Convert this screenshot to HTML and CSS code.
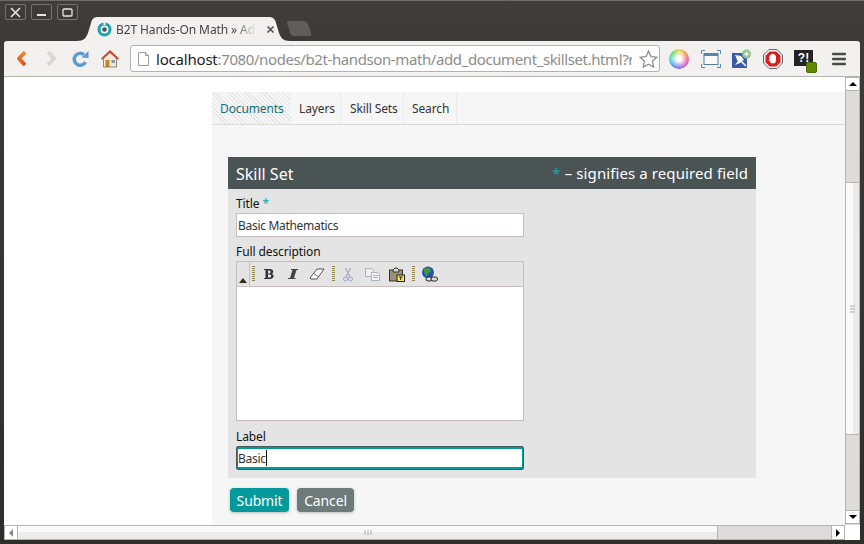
FILE: index.html
```html
<!DOCTYPE html>
<html lang="en">
<head>
    <meta charset="UTF-8">
    <title>B2T Hands-On Math</title>
    <link rel="stylesheet" href="styles.css">
</head>
<body>
    <div class="window">
        <div class="titlebar">
            <div class="win-buttons">
                <button class="win-btn"><svg width="11" height="11" viewBox="0 0 11 11"><path d="M1 1l9 9M10 1l-9 9" stroke="#e6e6e2" stroke-width="1.6" fill="none"/></svg></button>
                <button class="win-btn"><svg width="11" height="11" viewBox="0 0 11 11"><path d="M1 8h9" stroke="#e6e6e2" stroke-width="2" fill="none"/></svg></button>
                <button class="win-btn"><svg width="11" height="11" viewBox="0 0 11 11"><rect x="1" y="2" width="9" height="7" rx="1" stroke="#e6e6e2" stroke-width="1.3" fill="none"/></svg></button>
            </div>
            <div class="tab">
                <svg class="tab-shape" width="213" height="24" viewBox="0 0 213 24"><path d="M0 24c7 0 9-3 11-8l3-10c1-4 3-6 7-6h171c4 0 6 2 7 6l3 10c2 5 4 8 11 8z" fill="#f2f1f0"/></svg>
                <svg class="favicon" width="15" height="15" viewBox="0 0 15 15"><circle cx="7.5" cy="7.5" r="7" fill="#1fa3ad"/><circle cx="7.5" cy="7.5" r="4" fill="#e8f2f2"/><circle cx="7.5" cy="7.5" r="2.2" fill="#445a5e"/><rect x="6.5" y="0" width="2" height="3" fill="#e8f2f2"/></svg>
                <span class="tab-title">B2T Hands-On Math » Add D</span>
                <svg class="tab-close" width="9" height="9" viewBox="0 0 9 9"><path d="M1.5 1.500l6 6M7.500 1.500l-6 6" stroke="#555" stroke-width="1.7"/></svg>
            </div>
            <svg class="new-tab" width="25" height="16" viewBox="0 0 25 16"><path d="M1 0h16c2 0 3 1 4 3l3 9c.5 2 .5 3-1 3H7c-2 0-3-1-4-3L0 2c-.3-1 0-2 1-2z" fill="#5f5e5a"/></svg>
        </div>

        <div class="toolbar">
            <svg class="tool" width="16" height="19" viewBox="0 0 16 19"><defs><linearGradient id="back" x1="0" y1="0" x2="0" y2="1"><stop offset="0" stop-color="#ef8a3c"/><stop offset="1" stop-color="#d9531e"/></linearGradient></defs><path d="M11 3L5 9.500l6 6.500" stroke="url(#back)" stroke-width="4" stroke-linejoin="round" fill="none"/></svg>
            <svg class="tool" width="16" height="19" viewBox="0 0 16 19"><path d="M5 3l6 6.500L5 16" stroke="#d9d8d5" stroke-width="4" fill="none"/></svg>
            <svg class="tool" width="18" height="18" viewBox="0 0 18 18"><path d="M13.500 12.200A6 6 0 1 1 12 4.600" stroke="#5b9bd5" stroke-width="3.400" fill="none"/><path d="M9.500 7.500L16.500 8V1z" fill="#5b9bd5"/></svg>
            <svg class="tool" width="20" height="19" viewBox="0 0 20 19"><path d="M10 1L1 9.500h2.500V18h13V9.500H19z" fill="#f2ead6"/><path d="M10 1L1 9.500l1.500 1.200L10 4l7.500 6.700L19 9.500z" fill="#c2453a"/><rect x="5.500" y="11" width="4" height="7" fill="#c9861f"/><rect x="11.500" y="11" width="3.500" height="3" fill="#8a9aa8"/><path d="M3.500 10v8h13v-8" stroke="#8f8878" fill="none"/></svg>
            <div class="omnibox">
                <svg width="11" height="14" viewBox="0 0 11 14"><path d="M.5.500h7l3 3v10H.5z" fill="#fff" stroke="#9a9a9a"/><path d="M7.500.500v3h3" fill="none" stroke="#9a9a9a"/></svg>
                <span class="url"><b>localhost</b>:7080/nodes/b2t-handson-math/add_document_skillset.html?r</span>
                <svg width="19" height="18" viewBox="0 0 19 18"><path d="M9.500 1.200l2.500 5.400 5.800.7-4.300 4 1.200 5.800-5.200-2.900-5.200 2.900 1.200-5.800-4.300-4 5.800-.7z" fill="#fff" stroke="#8a8a8a" stroke-width="1.200"/></svg>
            </div>
            <div class="extensions">
                <span class="color-wheel"></span>
                <svg class="ext-window" width="20" height="18" viewBox="0 0 20 18"><path d="M.5 4V.5H4M16 .5h3.500V4M.5 14v3.500H4M16 17.500h3.500V14" fill="none" stroke="#4a86b8"/><rect x="3" y="3.500" width="14" height="11" fill="#fafafa" stroke="#5a7f9e"/><rect x="3" y="3.500" width="14" height="2.500" fill="#5a86aa"/></svg>
                <svg width="20" height="20" viewBox="0 0 20 20"><rect x="0" y="4" width="15" height="15" fill="#3b5ba8"/><path d="M3 6l6 1 3 4-2 1-2 2-3-3-1-3zM6 12l-3 4 5-2z" fill="#fff"/><path d="M9 12l5 5" stroke="#fff" stroke-width="1.500"/><circle cx="14.500" cy="5" r="4.500" fill="#8fc48c"/><path d="M14.500 2.800v4.400M12.300 5h4.400" stroke="#fff" stroke-width="1.300"/></svg>
                <svg width="20" height="20" viewBox="0 0 20 20"><path d="M6 .5h8L19.500 6v8L14 19.500H6L.5 14V6z" fill="#f4f4f4" stroke="#666"/><path d="M6.700 2.500h6.600L17.500 6.700v6.600l-4.200 4.200H6.700l-4.200-4.200V6.700z" fill="#d81f1f"/><path d="M6.500 9V6.500h1.300V5.200h1.300v-.5h1.300v.5h1.400v1.300h1.200v4.800l-1 3H8L6 11z" fill="#fff"/></svg>
                <div class="badge-icon"><span>?!</span><i class="badge-dot"></i></div>
                <svg class="ext-menu" width="14" height="14" viewBox="0 0 14 14"><path d="M1 2h12M1 7h12M1 12h12" stroke="#4a4a48" stroke-width="2.500" stroke-linecap="round"/></svg>
            </div>
        </div>

        <div class="viewport">
            <div class="page">
                <div class="panel">
                    <nav class="tabs">
                        <a class="nav-tab active">Documents</a>
                        <a class="nav-tab">Layers</a>
                        <a class="nav-tab">Skill Sets</a>
                        <a class="nav-tab">Search</a>
                    </nav>
                    <form class="form">
                        <div class="form-head">
                            <h2>Skill Set</h2>
                            <span class="required-note"><em>*</em> – signifies a required field</span>
                        </div>
                        <div class="form-body">
                            <label>Title <em>*</em></label>
                            <div class="input">Basic Mathematics</div>
                            <label class="gap">Full description</label>
                            <div class="editor">
                                <div class="editor-bar">
                                    <span class="collapse"><i></i></span>
                                    <span class="grip"></span>
                                    <svg class="ic-bold" width="12" height="12" viewBox="0 0 12 12"><path d="M1 1h6c4 0 4 4.500 1.500 5C12 6.500 11 11 7 11H1v-1h1.500V2H1zM5 2.500v3h1.500c1.500 0 1.500-3 0-3zM5 6.500v3h2c1.500 0 1.500-3 0-3z" fill="#333"/></svg>
                                    <svg class="ic-italic" width="12" height="12" viewBox="0 0 12 12"><path d="M4 1h7v1H9.500L7 10h1.500v1H1v-1h2L5.500 2H4z" fill="#444"/></svg>
                                    <svg class="ic-eraser" width="16" height="12" viewBox="0 0 16 12"><path d="M1 10l7-9h7l-7 10H2z" fill="#fbfbf6" stroke="#555"/><path d="M5 5.500l4 3" stroke="#777"/></svg>
                                    <span class="grip grip-b"></span>
                                    <svg class="ic-cut" width="10" height="15" viewBox="0 0 10 15"><path d="M2.500 1L7 10M7.500 1L3 10" stroke="#a9a9c2" stroke-width="1.200"/><circle cx="2.500" cy="12" r="2" fill="none" stroke="#a0a0d0"/><circle cx="7.500" cy="12" r="2" fill="none" stroke="#a0a0d0"/></svg>
                                    <svg class="ic-copy" width="15" height="13" viewBox="0 0 15 13"><path d="M.5.500h6l2 2v6h-8z" fill="#eee" stroke="#b0b0c0"/><path d="M6.500 4.500h6l2 2v6h-8z" fill="#f4f4f4" stroke="#b0b0c0"/><path d="M8 7.500h5M8 9.500h5" stroke="#b0b0c0"/></svg>
                                    <svg class="ic-paste" width="16" height="15" viewBox="0 0 16 15"><rect x=".5" y="3" width="13" height="11" fill="#98927a" stroke="#333"/><path d="M4 3l2-2h2l2 2v2H4z" fill="#d8d8d0" stroke="#333"/><rect x="8" y="8" width="7.500" height="6.500" fill="#f7e64a" stroke="#222"/><path d="M10 10h3.500M11.700 10v3" stroke="#222"/></svg>
                                    <span class="grip grip-b"></span>
                                    <svg class="ic-link" width="17" height="17" viewBox="0 0 17 17"><circle cx="7" cy="6.500" r="6" fill="#2a4fb0"/><path d="M3 3l3-1.500 3 1 1 3-3 2-1 3-2-2-1-3z" fill="#3f9a3a"/><rect x="5" y="11" width="6" height="4" rx="2" fill="#ddd" stroke="#222"/><rect x="10" y="11" width="6.500" height="4" rx="2" fill="#ddd" stroke="#222"/></svg>
                                </div>
                                <div class="editor-area"></div>
                            </div>
                            <label class="gap-sm">Label</label>
                            <div class="input focused">Basic<i class="caret"></i></div>
                        </div>
                        <div class="actions">
                            <button type="button" class="btn submit">Submit</button>
                            <button type="button" class="btn cancel">Cancel</button>
                        </div>
                    </form>
                </div>
            </div>
            <div class="vscroll">
                <span class="sb-btn up"><i></i></span>
                <span class="v-track"></span>
                <span class="v-thumb"><svg width="5" height="8" viewBox="0 0 5 8"><path d="M0 1h5M0 4h5M0 7h5" stroke="#aaa"/></svg></span>
                <span class="v-track fill"></span>
                <span class="sb-btn down"><i></i></span>
            </div>
        </div>

        <div class="hscroll">
            <span class="sb-btn left"><i></i></span>
            <span class="h-thumb"><svg width="8" height="5" viewBox="0 0 8 5"><path d="M1 0v5M4 0v5M7 0v5" stroke="#aaa"/></svg></span>
            <span class="h-track"></span>
            <span class="sb-btn right"><i></i></span>
            <span class="corner"></span>
        </div>
    </div>
</body>
</html>
```

FILE: styles.css
```css
* {
    box-sizing: border-box;
}
body {
    margin: 0;
    font-family: "Noto Sans", sans-serif;
    font-size: 12px;
    color: #222;
}
em {
    font-style: normal;
    color: #19a6a8;
}

.window {
    width: 864px;
    height: 544px;
    overflow: hidden;
    display: flex;
    flex-direction: column;
    padding: 0 4px 4px;
    border-top: 1px solid #6d6c68;
    background: linear-gradient(#3f3e3a 0, #3b3a36 41px, #2f2e2b 100%);
}

/* title bar */
.titlebar {
    height: 40px;
    display: flex;
    align-items: flex-start;
    flex: none;
}
.win-buttons {
    display: flex;
    gap: 5px;
    margin: 3px 0 0 1px;
}
.win-btn {
    width: 21px;
    height: 16px;
    padding: 0;
    display: flex;
    align-items: center;
    justify-content: center;
    border: 1px solid #75746f;
    border-radius: 2px;
    background: #3c3b37;
}
.tab {
    width: 213px;
    height: 24px;
    margin: 16px 0 0 -1px;
    padding: 0 0 0 20px;
    display: flex;
    align-items: center;
    flex: none;
    position: relative;
}
.tab-shape {
    position: absolute;
    left: 0;
    top: 0;
}
.favicon, .tab-title, .tab-close {
    position: relative;
}
.tab-title {
    width: 140px;
    margin-left: 4px;
    overflow: hidden;
    white-space: nowrap;
    color: #444;
    letter-spacing: -0.1px;
    -webkit-mask-image: linear-gradient(90deg, #000 85%, transparent);
    mask-image: linear-gradient(90deg, #000 85%, transparent);
}
.tab-close {
    margin-left: 10px;
}
.new-tab {
    margin: 20px 0 0 -3px;
}

/* toolbar */
.toolbar {
    height: 36px;
    flex: none;
    display: flex;
    align-items: center;
    padding-left: 10px;
    background: #f2f1f0;
    border-bottom: 1px solid #b5b4b1;
    border-radius: 3px 3px 0 0;
}
.tool {
    margin-right: 13px;
}
.toolbar .tool:nth-child(3) {
    margin-right: 10px;
}
.toolbar .tool:nth-child(4) {
    margin-right: 10px;
}
.omnibox {
    width: 530px;
    height: 27px;
    display: flex;
    align-items: center;
    gap: 7px;
    padding: 0 1px 0 7px;
    background: #fff;
    border: 1px solid #b3b2ae;
    border-radius: 3px;
    flex: none;
}
.url {
    flex: 1;
    overflow: hidden;
    white-space: nowrap;
    font-size: 15px;
    letter-spacing: -0.4px;
    color: #8c8c8c;
}
.url b {
    font-weight: 400;
    letter-spacing: -0.2px;
    color: #222;
}
.extensions {
    display: flex;
    align-items: center;
    gap: 11px;
    margin-left: 9px;
}
.color-wheel {
    width: 20px;
    height: 20px;
    border-radius: 50%;
    background:
        radial-gradient(#fff 15%, rgba(255, 255, 255, 0) 75%),
        conic-gradient(#f0d030, #f09030, #f04070, #d040c0, #7050e0, #3090f0, #30d0d0, #50d050, #f0d030);
}
.ext-window {
    margin-left: 1px;
}
.ext-menu {
    margin-left: 8px;
}
.badge-icon {
    width: 19px;
    height: 16px;
    background: #222;
    position: relative;
    color: #fff;
    font: bold 12px/16px "Liberation Sans", sans-serif;
    text-align: center;
    margin-top: -2px;
}
.badge-dot {
    position: absolute;
    right: -4px;
    bottom: -7px;
    width: 11px;
    height: 11px;
    border-radius: 2px;
    background: #5f8a00;
    border: 1px solid #4a6c00;
}

/* page */
.viewport {
    height: 448px;
    flex: none;
    display: flex;
    background: #fff;
}
.page {
    width: 841px;
    padding: 15px 0 0 208px;
}
.panel {
    width: 633px;
    height: 433px;
    background: #f6f6f6;
}
.tabs {
    height: 33px;
    display: flex;
    border-bottom: 1px solid #dcdcdc;
}
.nav-tab {
    line-height: 34px;
    padding-left: 8px;
    border-right: 1px solid #ececec;
    letter-spacing: -0.12px;
    white-space: nowrap;
    color: #333;
}
.nav-tab:nth-child(2) {
    width: 50px;
}
.nav-tab:nth-child(3) {
    width: 63px;
    padding-left: 9px;
}
.nav-tab:nth-child(4) {
    width: 53px;
}
.nav-tab.active {
    width: 79px;
    color: #14707a;
    background: repeating-linear-gradient(45deg, #e6e6e6 0 1px, #f6f6f6 1px 3px);
    border-right: 0;
}
.form {
    width: 528px;
    margin: 32px 0 0 16px;
}
.form-head {
    height: 32px;
    padding: 0 8px;
    display: flex;
    justify-content: space-between;
    align-items: center;
    background: #4a5455;
    color: #fff;
    font-size: 15px;
}
.form-head h2 {
    margin: 2px 0 0;
    font-size: 16px;
    font-weight: 400;
}
.required-note {
    letter-spacing: 0.1px;
}
.form-body {
    height: 289px;
    padding: 6px 8px 0;
    background: #e4e4e4;
}
.form-body label {
    display: block;
    height: 18px;
    line-height: 17px;
    letter-spacing: -0.1px;
    color: #111;
}
.form-body .gap {
    margin-top: 6px;
}
.form-body .gap-sm {
    margin-top: 7px;
}
.input {
    width: 288px;
    height: 24px;
    padding-left: 1px;
    line-height: 23px;
    letter-spacing: -0.3px;
    background: #fff;
    border: 1px solid #c8bebe;
    color: #333;
}
.input.focused {
    display: flex;
    align-items: center;
    border: 1px solid #46595b;
    border-radius: 2px;
    box-shadow: inset 0 0 0 1px #049a9c, inset 0 1px 0 1px #049a9c, inset 0 -1px 0 1px #049a9c;
}
.caret {
    width: 1px;
    height: 16px;
    background: #111;
}
.editor {
    width: 288px;
    height: 160px;
    border: 1px solid #c8bebe;
    background: #fff;
    display: flex;
    flex-direction: column;
}
.editor-bar {
    height: 25px;
    display: flex;
    align-items: center;
    background: #e4e4e4;
    border-bottom: 1px solid #c8bebe;
    flex: none;
}
.collapse {
    width: 13px;
    height: 24px;
    position: relative;
    margin-right: 2px;
    border-right: 1px solid #c8bebe;
}
.collapse i {
    position: absolute;
    left: 2px;
    bottom: 3px;
    border: 4px solid transparent;
    border-top: 0;
    border-bottom: 5px solid #332a20;
}
.grip {
    width: 3px;
    height: 16px;
    background: repeating-linear-gradient(#8f8550 0 1px, #e4e4e4 1px 2px);
}
.grip-b {
    margin-left: 7px;
}
.ic-bold { margin-left: 8px; }
.ic-italic { margin-left: 12px; }
.ic-eraser { margin-left: 10px; }
.ic-cut { margin-left: 8px; }
.ic-copy { margin-left: 12px; }
.ic-paste { margin-left: 9px; }
.ic-link { margin-left: 6px; }
.actions {
    display: flex;
    gap: 8px;
    margin: 10px 0 0 2px;
}
.btn {
    height: 24px;
    padding: 0 6px;
    border: 0;
    border-radius: 4px;
    color: #fff;
    font: 14px "Noto Sans", sans-serif;
    letter-spacing: -0.15px;
    box-shadow: 0 1px 3px rgba(0, 0, 0, 0.25);
}
.submit {
    width: 59px;
    background: #049a9c;
}
.cancel {
    width: 57px;
    background: #6c7a79;
}

/* scrollbars */
.vscroll {
    width: 15px;
    display: flex;
    flex-direction: column;
    background: #dddcda;
    border-left: 1px solid #b5b4b1;
    border-right: 1px solid #b5b4b1;
}
.v-track {
    height: 91px;
    flex: none;
}
.v-track.fill {
    height: 75px;
}
.v-thumb {
    height: 253px;
    flex: none;
    display: flex;
    align-items: center;
    justify-content: center;
    background: linear-gradient(90deg, #fafafa 50%, #ecebe9 50%);
    border-top: 1px solid #b5b4b1;
    border-bottom: 1px solid #b5b4b1;
}
.sb-btn {
    display: flex;
    align-items: center;
    justify-content: center;
    flex: none;
    background: #fff;
    border: 1px solid #b5b4b1;
}
.sb-btn.up, .sb-btn.down {
    height: 14px;
    border-left: 0;
    border-right: 0;
}
.up i {
    border: 4px solid transparent;
    border-top: 0;
    border-bottom: 4px solid #000;
}
.down i {
    border: 4px solid transparent;
    border-bottom: 0;
    border-top: 4px solid #000;
}
.hscroll {
    height: 15px;
    flex: none;
    display: flex;
    background: #dddcda;
    border-top: 1px solid #b5b4b1;
    border-bottom: 1px solid #b5b4b1;
}
.sb-btn.left, .sb-btn.right {
    width: 14px;
    border-top: 0;
    border-bottom: 0;
}
.left i {
    border: 4px solid transparent;
    border-left: 0;
    border-right: 4px solid #888;
}
.right i {
    border: 4px solid transparent;
    border-right: 0;
    border-left: 4px solid #000;
}
.h-thumb {
    width: 700px;
    display: flex;
    align-items: center;
    justify-content: center;
    background: linear-gradient(#fafafa 50%, #ecebe9 50%);
    border-right: 1px solid #b5b4b1;
}
.h-track {
    width: 113px;
}
.corner {
    width: 15px;
    background: #fff;
    margin: -1px 0;
}
```
